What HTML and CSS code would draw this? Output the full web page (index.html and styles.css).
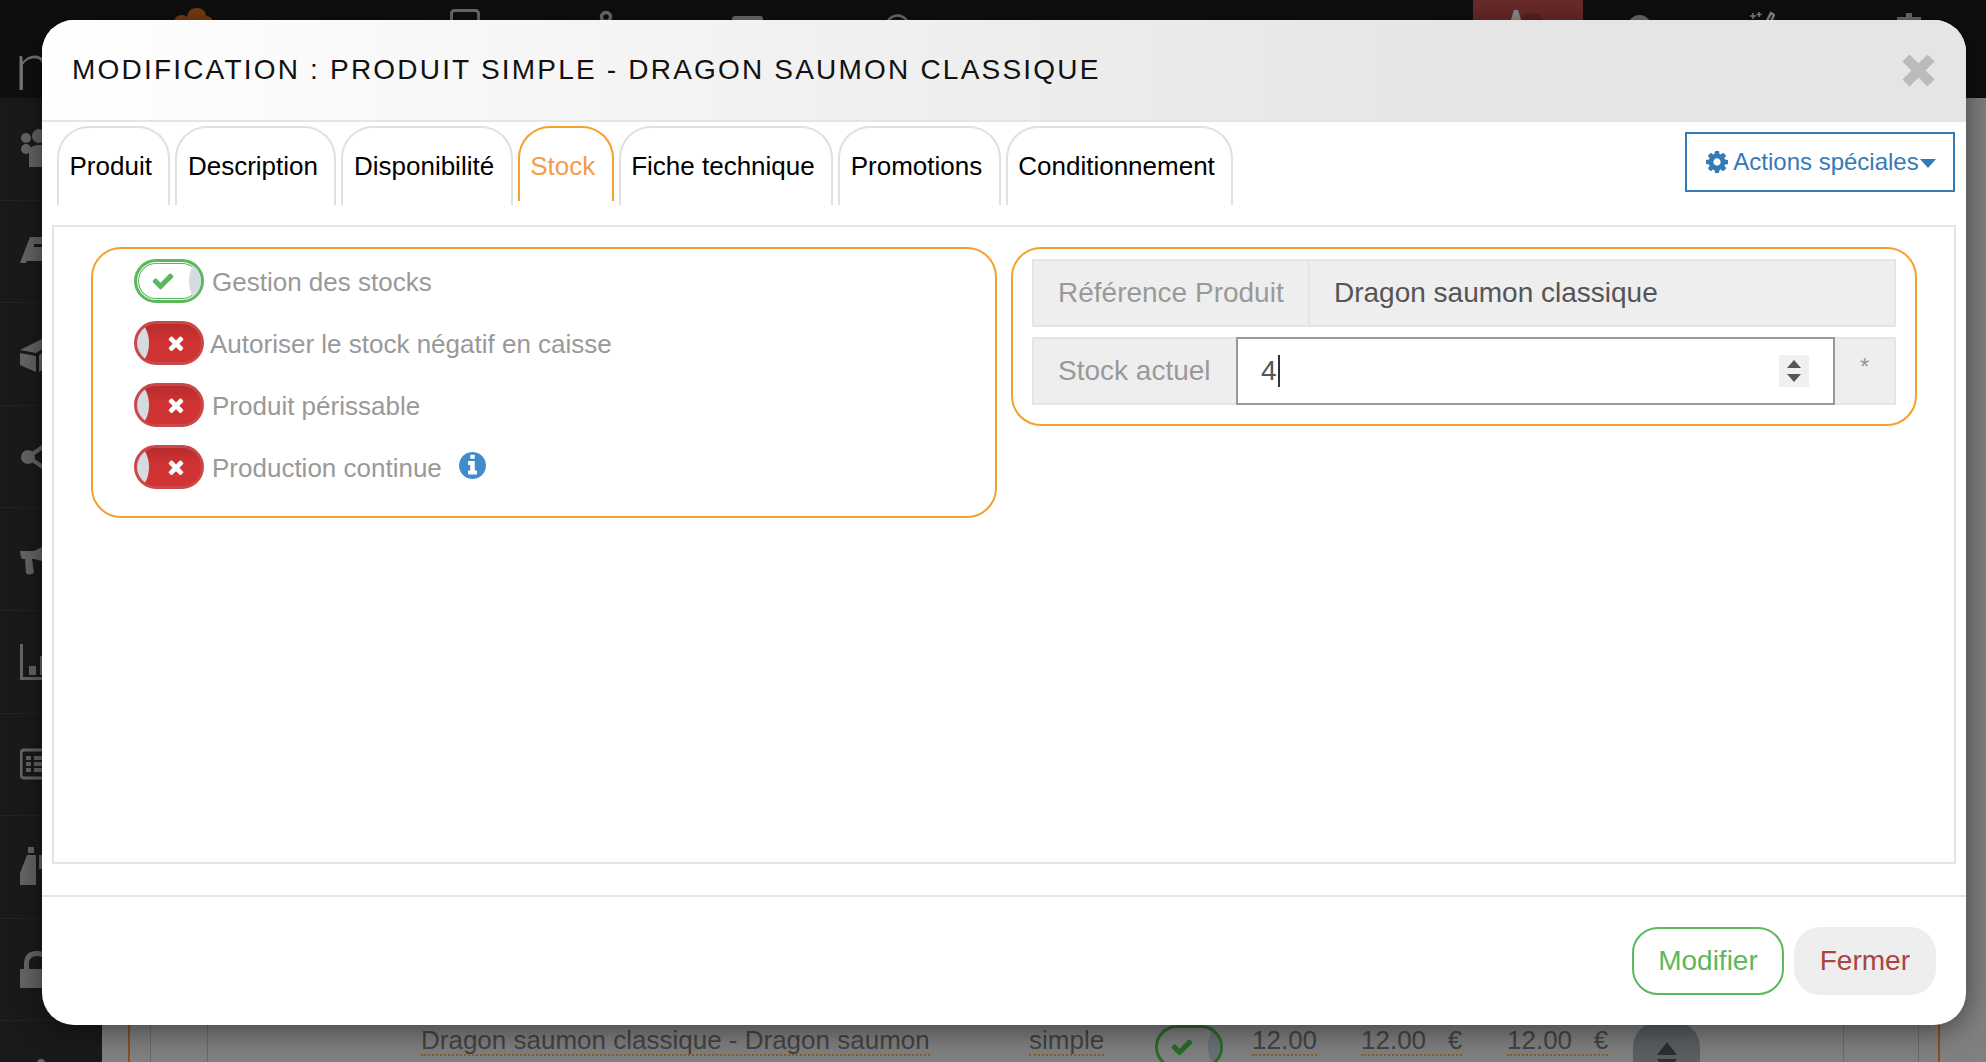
FILE: index.html
```html
<!DOCTYPE html>
<html lang="fr">
<head>
  <meta charset="UTF-8">
  <title>Modification produit</title>
  <link rel="stylesheet" href="styles.css">
</head>
<body>
  <div class="app">
    <header class="topbar">
      <span class="logo">n</span>
      <svg class="ti ti-cloud" width="39" height="30" viewBox="0 0 39 30"><path d="M0 14q1-7 8-7 3 0 5 2 1-9 10-9 8 0 9 8 6 0 7 6v16H0z"/></svg>
      <svg class="ti ti-screen" width="30" height="24" viewBox="0 0 30 24"><rect x="1.5" y="1.5" width="27" height="18" rx="3" fill="none" stroke="#6e6e6e" stroke-width="3"/></svg>
      <svg class="ti ti-gears" width="32" height="24" viewBox="0 0 32 24"><circle cx="24" cy="7" r="4.500" fill="none" stroke="#6e6e6e" stroke-width="3.500"/><path d="M0 24v-8h4v-3h4v-2h4v5h6v8z" fill="#6e6e6e"/></svg>
      <svg class="ti ti-bar" width="31" height="14" viewBox="0 0 31 14"><rect width="31" height="14" rx="3" fill="#6e6e6e"/></svg>
      <svg class="ti ti-face" width="25" height="24" viewBox="0 0 25 24"><circle cx="12.500" cy="12.500" r="11" fill="none" stroke="#6e6e6e" stroke-width="2.500"/></svg>
      <div class="top-active">
        <svg width="50" height="30" viewBox="0 0 50 30"><path d="M4 30L13 1h4l9 29z" fill="#8f8f8f"/><circle cx="31" cy="17" r="13" fill="#5c2222"/></svg>
      </div>
      <svg class="ti ti-help" width="23" height="24" viewBox="0 0 23 24"><circle cx="11.500" cy="11.500" r="11.500" fill="#6e6e6e"/></svg>
      <svg class="ti ti-wand" width="27" height="24" viewBox="0 0 27 24"><path d="M2 6h6M5 3v6M11 2v5M8.500 4.500h5" stroke="#8a8a8a" stroke-width="1.500"/><path d="M15 18L23 3l3 2-7 15z" fill="none" stroke="#8a8a8a" stroke-width="2.500"/></svg>
      <svg class="ti ti-plug" width="24" height="24" viewBox="0 0 24 24"><path d="M9 0h6v4h9v20H0V4h9z" fill="#6e6e6e"/></svg>
    </header>

    <nav class="sidebar">
      <div class="side-item"><svg width="60" height="40" viewBox="0 0 60 40"><circle cx="6" cy="9" r="5"/><circle cx="6" cy="20" r="5"/><circle cx="19" cy="7" r="7"/><path d="M9 38V24q0-8 10-8h6q10 0 10 8v14z"/></svg></div>
      <div class="side-item"><svg width="60" height="40" viewBox="0 0 60 40"><path d="M0 32L10 6h34v26z"/><rect x="6" y="30" width="36" height="5" rx="2" fill="#1a1a1a"/><rect x="14" y="13" width="26" height="3" fill="#1a1a1a"/></svg></div>
      <div class="side-item"><svg width="60" height="40" viewBox="0 0 60 40"><path d="M0 16L24 4v10l-8 5z"/><path d="M0 19l16 3v16L0 31zM19 21l8-5v17l-8 5z"/></svg></div>
      <div class="side-item"><svg width="60" height="40" viewBox="0 0 60 40"><circle cx="8" cy="20" r="7"/><circle cx="30" cy="5" r="7"/><circle cx="30" cy="35" r="7"/><path d="M8 20L30 5M8 20l22 15" stroke="#666" stroke-width="4"/></svg></div>
      <div class="side-item"><svg width="60" height="40" viewBox="0 0 60 40"><path d="M0 12h14L30 4v20l-16-4h-2l2 14q-6 3-8 0L5 20H2q-2-4-2-8z"/></svg></div>
      <div class="side-item"><svg width="60" height="40" viewBox="0 0 60 40"><path d="M0 2h3v33h40v3H0z"/><rect x="9" y="24" width="7" height="9"/><rect x="20" y="14" width="7" height="19"/></svg></div>
      <div class="side-item"><svg width="60" height="40" viewBox="0 0 60 40"><rect x="1" y="6" width="50" height="28" rx="3" fill="none" stroke="#666" stroke-width="3"/><path d="M6 12h5v4H6zM6 18h5v4H6zM6 24h5v4H6zM14 12h30v4H14zM14 18h30v4H14zM14 24h30v4H14z"/></svg></div>
      <div class="side-item"><svg width="60" height="40" viewBox="0 0 60 40"><path d="M0 38V26L7 8h9v30z"/><path d="M8 0h6v6H8zM19 8h8v14h-8z"/></svg></div>
      <div class="side-item"><svg width="60" height="40" viewBox="0 0 60 40"><path d="M0 38V19h4v-5q0-13 13-13t13 13v5h4v19zM9 19h16v-5q0-8-8-8t-8 8z"/></svg></div>
      <div class="side-item side-last"><svg width="60" height="40" viewBox="0 0 60 40"><path d="M8 9h26v3H8z"/><circle cx="21" cy="10" r="4"/></svg></div>
    </nav>

    <main class="page">
      <div class="table">
        <div class="tcell c1"></div>
        <div class="tcell c2"></div>
        <div class="tcell c3"><span class="dotted">Dragon saumon classique - Dragon saumon</span></div>
        <div class="tcell c4"><span class="dotted">simple</span></div>
        <div class="tcell c5">
          <span class="mini-toggle"><svg width="24" height="24" viewBox="0 0 1792 1792"><path fill="#2a6b2a" d="M1671 566q0 40-28 68l-724 724-136 136q-28 28-68 28t-68-28l-136-136-362-362q-28-28-28-68t28-68l136-136q28-28 68-28t68 28l294 295 656-657q28-28 68-28t68 28l136 136q28 28 28 68z"/></svg></span>
        </div>
        <div class="tcell c6"><span class="dotted">12.00</span></div>
        <div class="tcell c7"><span class="dotted">12.00&nbsp;&nbsp;&nbsp;€</span></div>
        <div class="tcell c8"><span class="dotted">12.00&nbsp;&nbsp;&nbsp;€</span></div>
        <div class="tcell c9">
          <span class="sort-btn"><svg width="20" height="34" viewBox="0 0 20 34"><path d="M10 0l10 13H0zM0 17h20L10 30z" fill="#2b3033"/></svg></span>
        </div>
        <div class="tcell c10"></div>
        <div class="tcell c11"></div>
      </div>
    </main>
  </div>

  <div class="modal">
    <div class="modal-header">
      <h4 class="modal-title">Modification : produit simple - Dragon saumon classique</h4>
      <svg class="modal-close" width="33" height="33" viewBox="0 0 33 33"><path d="M4 4l25 25M29 4L4 29" stroke="#bbb" stroke-width="10"/></svg>
    </div>

    <div class="tab-row">
      <ul class="tabs">
        <li class="tab">Produit</li>
        <li class="tab">Description</li>
        <li class="tab">Disponibilité</li>
        <li class="tab active">Stock</li>
        <li class="tab">Fiche technique</li>
        <li class="tab">Promotions</li>
        <li class="tab">Conditionnement</li>
      </ul>
      <button class="actions-btn">
        <svg width="22" height="24" viewBox="128 128 1536 1536"><path fill="#337ab7" d="M1152 896q0-106-75-181t-181-75-181 75-75 181 75 181 181 75 181-75 75-181zm512-109v222q0 12-8 23t-20 13l-185 28q-19 54-39 91 35 50 107 138 10 12 10 25t-9 23q-27 37-99 108t-94 71q-12 0-26-9l-138-108q-44 23-91 38-16 136-29 186-7 28-36 28h-222q-14 0-24.5-8.5t-11.500-21.500l-28-184q-49-16-90-37l-141 107q-10 9-25 9-14 0-25-11-126-114-165-168-7-10-7-23 0-12 8-23 15-21 51-66.500t54-70.500q-27-50-41-99l-183-27q-13-2-21-12.500t-8-23.500v-222q0-12 8-23t19-13l186-28q14-46 39-92-40-57-107-138-10-12-10-24 0-10 9-23 26-36 98.500-107.500t94.500-71.500q13 0 26 10l138 107q44-23 91-38 16-136 29-186 7-28 36-28h222q14 0 24.500 8.500t11.500 21.500l28 184q49 16 90 37l142-107q9-9 24-9 13 0 25 10 129 119 165 170 7 8 7 22 0 12-8 23-15 21-51 66.500t-54 70.500q26 50 41 98l183 28q13 2 21 12.500t8 23.500z"/></svg>
        <span>Actions spéciales</span><i class="caret"></i>
      </button>
    </div>

    <div class="tab-panel">
      <div class="box box-left">
        <div class="check-row">
          <span class="toggle on"><svg width="24" height="24" viewBox="0 0 1792 1792"><path fill="#5cb85c" d="M1671 566q0 40-28 68l-724 724-136 136q-28 28-68 28t-68-28l-136-136-362-362q-28-28-28-68t28-68l136-136q28-28 68-28t68 28l294 295 656-657q28-28 68-28t68 28l136 136q28 28 28 68z"/></svg></span>
          <span class="check-label">Gestion des stocks</span>
        </div>
        <div class="check-row">
          <span class="toggle off"><svg width="22" height="22" viewBox="0 0 1792 1792"><path fill="#fff" d="M1490 1322q0 40-28 68l-136 136q-28 28-68 28t-68-28l-294-294-294 294q-28 28-68 28t-68-28l-136-136q-28-28-28-68t28-68l294-294-294-294q-28-28-28-68t28-68l136-136q28-28 68-28t68 28l294 294 294-294q28-28 68-28t68 28l136 136q28 28 28 68t-28 68l-294 294 294 294q28 28 28 68z"/></svg></span>
          <span class="check-label tight">Autoriser le stock négatif en caisse</span>
        </div>
        <div class="check-row">
          <span class="toggle off"><svg width="22" height="22" viewBox="0 0 1792 1792"><path fill="#fff" d="M1490 1322q0 40-28 68l-136 136q-28 28-68 28t-68-28l-294-294-294 294q-28 28-68 28t-68-28l-136-136q-28-28-28-68t28-68l294-294-294-294q-28-28-28-68t28-68l136-136q28-28 68-28t68 28l294 294 294-294q28-28 68-28t68 28l136 136q28 28 28 68t-28 68l-294 294 294 294q28 28 28 68z"/></svg></span>
          <span class="check-label">Produit périssable</span>
        </div>
        <div class="check-row">
          <span class="toggle off"><svg width="22" height="22" viewBox="0 0 1792 1792"><path fill="#fff" d="M1490 1322q0 40-28 68l-136 136q-28 28-68 28t-68-28l-294-294-294 294q-28 28-68 28t-68-28l-136-136q-28-28-28-68t28-68l294-294-294-294q-28-28-28-68t28-68l136-136q28-28 68-28t68 28l294 294 294-294q28-28 68-28t68 28l136 136q28 28 28 68t-28 68l-294 294 294 294q28 28 28 68z"/></svg></span>
          <span class="check-label">Production continue</span>
          <svg class="info-icon" width="27" height="27" viewBox="128 128 1536 1536"><path fill="#428bca" d="M1152 1376v-160q0-14-9-23t-23-9h-96v-512q0-14-9-23t-23-9h-320q-14 0-23 9t-9 23v160q0 14 9 23t23 9h96v320h-96q-14 0-23 9t-9 23v160q0 14 9 23t23 9h448q14 0 23-9t9-23zm-128-896v-160q0-14-9-23t-23-9h-192q-14 0-23 9t-9 23v160q0 14 9 23t23 9h192q14 0 23-9t9-23zm640 416q0 209-103 385.500t-279.500 279.500-385.500 103-385.500-103-279.500-279.500-103-385.500 103-385.500 279.500-279.500 385.500-103 385.500 103 279.500 279.500 103 385.500z"/></svg>
        </div>
      </div>

      <div class="box box-right">
        <div class="input-group">
          <span class="addon addon-ref">Référence Produit</span>
          <span class="static-value">Dragon saumon classique</span>
        </div>
        <div class="input-group">
          <span class="addon addon-stock">Stock actuel</span>
          <div class="number-input">
            <span class="number-value">4</span><span class="text-caret"></span>
            <span class="spinner"><svg width="18" height="26" viewBox="0 0 18 26"><path d="M9 2l7 8H2zM2 16h14l-7 8z" fill="#555"/></svg></span>
          </div>
          <span class="addon addon-star">*</span>
        </div>
      </div>
    </div>

    <div class="modal-footer">
      <button class="btn btn-save">Modifier</button>
      <button class="btn btn-close">Fermer</button>
    </div>
  </div>
</body>
</html>
```

FILE: styles.css
```css
* {
  box-sizing: border-box;
}
body {
  margin: 0;
  height: 100vh;
  overflow: hidden;
  font-family: "Liberation Sans", Arial, sans-serif;
  background-color: #808080;
}
.app {
  display: grid;
  grid-template-columns: 102px 1fr;
  grid-template-rows: 98px 1fr;
  height: 100vh;
}

/* barre du haut, derriere la modale */
.topbar {
  grid-column: 1 / 3;
  display: flex;
  align-items: flex-start;
  background-color: #0f0f0f;
  position: relative;
}
.logo {
  position: absolute;
  left: 14px;
  top: 24px;
  font-family: Lato, sans-serif;
  font-weight: 300;
  font-size: 68px;
  line-height: 80px;
  color: #777;
}
.ti {
  flex: none;
}
.ti-cloud {
  margin: 8px 0 0 174px;
  fill: #7a3d12;
}
.ti-screen {
  margin: 9px 0 0 237px;
}
.ti-gears {
  margin: 10px 0 0 102px;
}
.ti-bar {
  margin: 16px 0 0 118px;
}
.ti-face {
  margin: 14px 0 0 122px;
}
.top-active {
  width: 110px;
  height: 98px;
  margin-left: 563px;
  padding: 9px 0 0 28px;
  background-color: #6b2a2a;
  flex: none;
}
.ti-help {
  margin: 15px 0 0 45px;
}
.ti-wand {
  margin: 10px 0 0 97px;
}
.ti-plug {
  margin: 13px 0 0 122px;
}

/* menu de gauche */
.sidebar {
  background-color: #1a1a1a;
  overflow: hidden;
}
.side-item {
  height: 102.6px;
  padding-left: 20px;
  display: flex;
  align-items: center;
  border-bottom: 1px solid #232323;
  fill: #666;
}
.side-item.side-last {
  border-bottom: none;
}

/* tableau derriere la modale */
.page {
  position: relative;
  overflow: hidden;
  display: flex;
  padding: 0 46px 0 26px;
}
.table {
  flex: 1;
  display: grid;
  grid-template-columns: 21px 57px 821px 126px 97px 109px 146px 126px 211px 75px 1fr;
  border-left: 2px solid #8a4f1e;
  border-right: 2px solid #8a4f1e;
  color: #444;
  font-size: 26px;
}
.tcell {
  display: flex;
  align-items: flex-end;
  padding-bottom: 6px;
}
.c1, .c2, .c9, .c10 {
  border-right: 1px solid #6a6a6a;
}
.c3 {
  padding-left: 213px;
}
.dotted {
  line-height: 27px;
  border-bottom: 2px dotted #8f5a1e;
  white-space: nowrap;
}
.c5 {
  padding-bottom: 0;
}
.mini-toggle {
  width: 68px;
  height: 44px;
  margin-bottom: -7px;
  padding-left: 12px;
  position: relative;
  overflow: hidden;
  display: flex;
  align-items: center;
  border: 3px solid #2a6b2a;
  border-radius: 22px;
}
.mini-toggle::after {
  content: '';
  position: absolute;
  right: -12px;
  top: -2px;
  bottom: -2px;
  width: 24px;
  border-radius: 50%;
  background-color: #6a7075;
}
.c9 {
  padding-bottom: 0;
}
.sort-btn {
  width: 67px;
  height: 62px;
  margin-bottom: -22px;
  padding-top: 20px;
  display: flex;
  justify-content: center;
  border-radius: 25px;
  background-color: #5a5f63;
}

/* modale */
.modal {
  position: absolute;
  left: 42px;
  top: 20px;
  width: 1924px;
  height: 1005px;
  display: flex;
  flex-direction: column;
  background-color: #fff;
  border-radius: 32px;
  box-shadow: 0 5px 30px rgba(0, 0, 0, 0.5);
}
.modal-header {
  height: 102px;
  display: flex;
  align-items: center;
  justify-content: space-between;
  padding: 0 31px 0 30px;
  background: linear-gradient(90deg, #fff 0%, #e5e5e5 75%);
  border-bottom: 2px solid #e5e5e5;
  border-radius: 32px 32px 0 0;
}
.modal-title {
  margin: 0 0 1px;
  font-size: 28px;
  font-weight: normal;
  letter-spacing: 2.2px;
  text-transform: uppercase;
  color: #111;
}
.tab-row {
  display: flex;
  justify-content: space-between;
  align-items: flex-start;
  padding: 4px 11px 0 15px;
}
.tabs {
  display: flex;
  gap: 5px;
  margin: 0;
  padding: 0;
  list-style: none;
}
.tab {
  height: 79px;
  padding: 19.5px 16.5px 0 10.5px;
  border: 2px solid #e0e0e0;
  border-bottom: none;
  border-radius: 32px 32px 0 0;
  font-size: 26px;
  line-height: 36px;
  color: #000;
}
.tab.active {
  height: 75px;
  border-color: #f5a02a;
  color: #f59b4c;
}
.actions-btn {
  width: 270px;
  height: 60px;
  margin-top: 6px;
  display: flex;
  align-items: center;
  justify-content: center;
  gap: 5px;
  padding: 0 0 0 2px;
  background-color: #fff;
  border: 2px solid #337ab7;
  font-family: inherit;
  font-size: 24px;
  color: #337ab7;
}
.caret {
  width: 0;
  height: 0;
  margin: 3px 0 0 -4px;
  border-left: 8px solid transparent;
  border-right: 8px solid transparent;
  border-top: 9px solid #337ab7;
}
.tab-panel {
  height: 639px;
  margin: 20px 10px 0;
  padding: 20px 37px;
  display: flex;
  align-items: flex-start;
  gap: 14px;
  border: 2px solid #e5e5e5;
}
.box {
  width: 906px;
  flex: none;
  border: 2px solid #f5a02a;
  border-radius: 30px;
}
.box-left {
  height: 271px;
  padding: 10px 20px 0 41px;
}
.check-row {
  height: 44px;
  margin-bottom: 18px;
  display: flex;
  align-items: center;
}
.toggle {
  width: 70px;
  height: 44px;
  position: relative;
  overflow: hidden;
  flex: none;
  display: flex;
  align-items: center;
  border-radius: 22px;
  border: 3px solid;
}
.toggle::after {
  content: '';
  position: absolute;
  top: -2px;
  bottom: -2px;
  width: 24px;
  background-color: #d5dbe1;
  border-radius: 50%;
}
.toggle.on {
  border-color: #5cb85c;
  box-shadow: inset 0 0 0 1px #fff, inset 0 0 0 2px #5cb85c;
  padding-left: 14px;
}
.toggle.on::after {
  right: -12px;
}
.toggle.off {
  border-color: #c9494a;
  background: linear-gradient(#b92c2c, #cf3333 45%);
  padding-left: 28px;
}
.toggle.off::after {
  left: -12px;
}
.check-label {
  margin: 2px 0 0 8px;
  font-size: 26px;
  color: #999;
}
.check-label.tight {
  margin-left: 6px;
}
.info-icon {
  margin: -3px 0 0 17px;
}
.box-right {
  padding: 10px 19px 0;
  height: 179px;
}
.input-group {
  height: 68px;
  margin-bottom: 10px;
  display: flex;
  align-items: stretch;
  background-color: #eee;
  border: 2px solid #e5e5e5;
  font-size: 28px;
  line-height: 64px;
}
.addon {
  padding-left: 24px;
  color: #999;
  flex: none;
  white-space: nowrap;
}
.addon-ref {
  width: 276px;
  border-right: 2px solid #e5e5e5;
}
.static-value {
  padding-left: 24px;
  color: #555;
}
.addon-stock {
  width: 202px;
}
.number-input {
  width: 599px;
  margin: -2px 0;
  padding-left: 23px;
  display: flex;
  align-items: center;
  position: relative;
  background-color: #fff;
  border: 2px solid #999;
  color: #555;
}
.text-caret {
  width: 2px;
  height: 32px;
  margin-left: 1px;
  background-color: #333;
}
.spinner {
  position: absolute;
  right: 24px;
  top: 16px;
  width: 30px;
  height: 32px;
  display: flex;
  align-items: center;
  justify-content: center;
  background-color: #f0f0f0;
}
.addon-star {
  padding-left: 25px;
  line-height: 56px;
  font-size: 24px;
}
.modal-footer {
  margin-top: 31px;
  padding: 30px 30px 0;
  display: flex;
  justify-content: flex-end;
  gap: 10px;
  border-top: 2px solid #e5e5e5;
}
.btn {
  height: 68px;
  padding: 0 26px;
  border-radius: 26px;
  font-family: inherit;
  font-size: 28px;
}
.btn-save {
  padding: 0 24px;
  background-color: #fff;
  border: 2px solid #5cb85c;
  color: #5cb85c;
}
.btn-close {
  background-color: #eee;
  border: none;
  color: #a94442;
}
```
